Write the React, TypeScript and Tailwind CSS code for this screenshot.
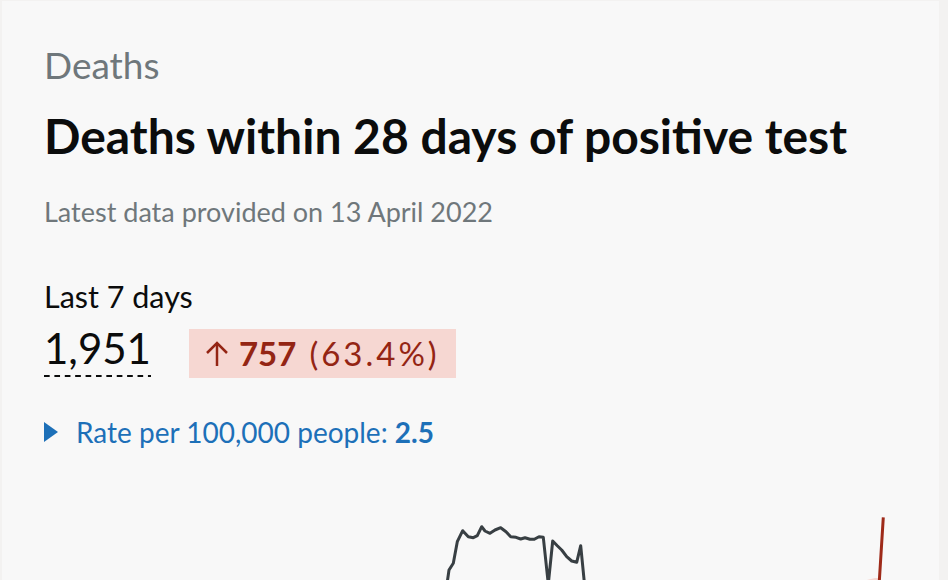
import React from 'react'

const font = { fontFamily: 'Lato, "Noto Sans", sans-serif' }

// 趋势折线：坐标按卡片左上角 (y 从 500 起) 计算
const greyLine =
    '445,84 447,70 451.3,63.3 455.3,41.7 460.7,30.7 466.3,36.7 471.3,37.7 475.3,35.7 479.7,26.7 483,31 488,33.3 493,30 498.7,27.7 504,31.7 508.7,36.7 514,37.3 518.7,39 523,37.7 528,39.3 532.3,39.3 537,36.7 541.3,37.3 546.3,84 550.7,41 555.3,45.7 559.7,50 564.7,56.7 569.7,61 574.7,62.3 578.7,45.7 582.5,84'
const redLine = '881.3,17.3 877,86'

const App: React.FC = () => {
    return (
        <div className="h-[580px] w-[948px] overflow-hidden bg-[#f3f2f1] pt-[1px] pl-[2px]" style={font}>
            <div className="h-[579px] w-[937px] overflow-hidden bg-[#f8f8f8] pl-[42px] pt-[45px]">
                {/* 标题区 */}
                <div className="text-[37px] leading-[38px] text-[#6f777b]">Deaths</div>
                <h2 className="mt-[28px] text-[48px] font-bold leading-none text-[#0b0c0c]">
                    Deaths within 28 days of positive test
                </h2>
                <p className="mt-[38px] text-[27px] leading-[28px] text-[#6f777b]">
                    Latest data provided on 13 April 2022
                </p>

                {/* 数据区 */}
                <div className="mt-[56px] text-[30.5px] leading-[29px] text-[#0b0c0c]">Last 7 days</div>
                <div className="mt-[16px] flex items-start">
                    <div className="flex flex-col">
                        <span className="text-[42px] font-normal leading-none text-[#0b0c0c]">1,951</span>
                        <div className="mt-[6px] h-[2px] w-full bg-[linear-gradient(to_right,#0b0c0c_6px,transparent_6px)] bg-[length:10.4px_2px] bg-repeat-x"></div>
                    </div>
                    <div className="ml-[38px] mt-[2px] flex h-[49px] items-center bg-[#f6d7d2] pl-[16px] pr-[16px] text-[#942514]">
                        <svg width="24" height="26" viewBox="0 0 24 26" fill="none" stroke="#942514" strokeWidth="2.5">
                            <path d="M12 25V2" />
                            <path d="M2 12L12 2L22 12" />
                        </svg>
                        <span className="ml-[10px] text-[33px] font-bold leading-none">757</span>
                        <span className="ml-[13px] text-[33px] leading-none tracking-[3px]">(63.4%)</span>
                    </div>
                </div>

                <div className="mt-[40px] flex items-center text-[28px] leading-none text-[#1d70b8]">
                    <svg width="14" height="20" viewBox="0 0 14 20" fill="#1d70b8">
                        <polygon points="0,0 14,10 0,20" />
                    </svg>
                    <span className="ml-[18px]">
                        Rate per 100,000 people: <b className="font-bold">2.5</b>
                    </span>
                </div>

                {/* 迷你图表 */}
                <svg className="ml-[-42px] mt-[54px] block" width="937" height="90" viewBox="0 0 937 90" fill="none">
                    <polyline points="865,81 873,79 877,79" stroke="#f6d7d2" strokeWidth="2" />
                    <polyline points={greyLine} stroke="#383f43" strokeWidth="3" strokeLinejoin="round" />
                    <polyline points={redLine} stroke="#9e2a19" strokeWidth="3" />
                </svg>
            </div>
        </div>
    )
}

export default App
